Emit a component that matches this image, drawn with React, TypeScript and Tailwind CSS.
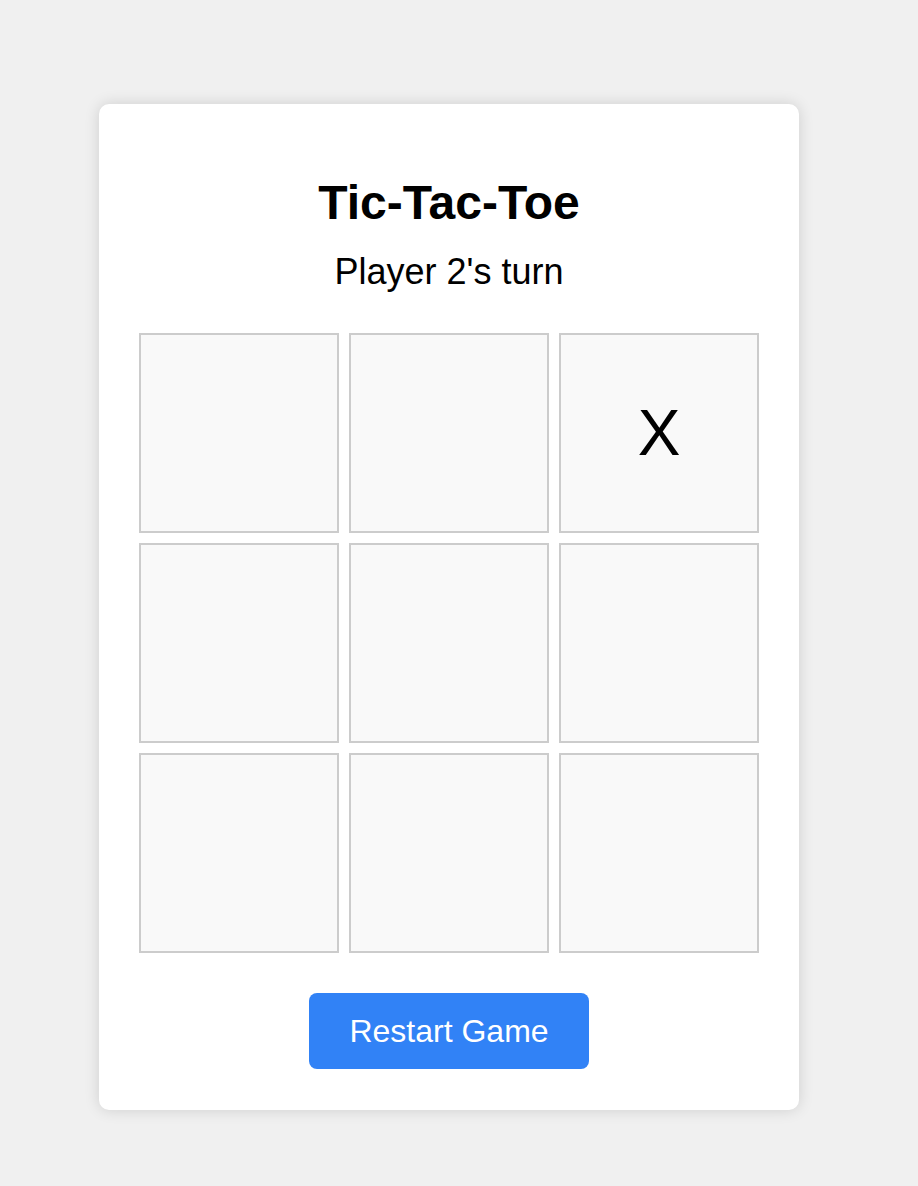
const board: string[] = ["", "", "X", "", "", "", "", "", ""];

export default function App() {
  return (
    <main className="min-h-screen bg-[#f0f0f0] pr-5 pt-[104px] pb-10 font-['Liberation_Sans',Arial,sans-serif] text-black">
      <div className="mx-auto w-[700px] rounded-[10px] bg-white px-10 pt-[72px] pb-[41px] text-center shadow-[0_0_15px_rgba(0,0,0,0.14)]">
        <h1 className="text-[48px] font-bold leading-[54px]">Tic-Tac-Toe</h1>
        <p className="mt-[22px] text-[36px] leading-[40px]">Player 2's turn</p>

        <div className="mt-[41px] grid grid-cols-[repeat(3,200px)] gap-[10px]">
          {board.map((cell, i) => (
            <button
              key={i}
              className="flex h-[200px] w-[200px] items-center justify-center border-2 border-[#cccccc] bg-[#f9f9f9] text-[64px] leading-none"
            >
              {cell}
            </button>
          ))}
        </div>

        <button className="mt-10 h-[76px] w-[280px] rounded-lg bg-[#3182f6] text-[32px] text-white">
          Restart Game
        </button>
      </div>
    </main>
  );
}
